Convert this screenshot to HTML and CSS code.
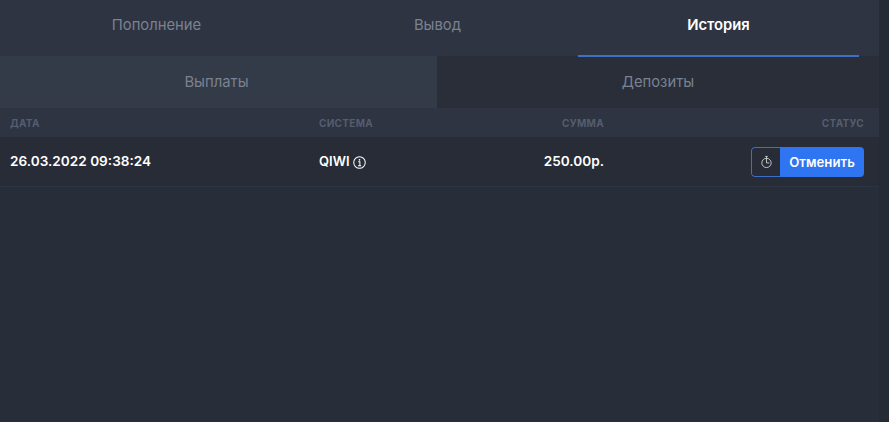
FILE: index.html
```html
<!DOCTYPE html>
<html lang="ru">
<head>
<meta charset="utf-8">
<title>История</title>
<link rel="stylesheet" href="styles.css">
</head>
<body>
<div class="page">
  <main class="panel">
    <nav class="tabs">
      <a class="tab">Пополнение</a>
      <a class="tab">Вывод</a>
      <a class="tab tab-active">История</a>
    </nav>
    <div class="subtabs">
      <a class="subtab subtab-active">Выплаты</a>
      <a class="subtab">Депозиты</a>
    </div>
    <div class="row row-head">
      <div class="col-date">Дата</div>
      <div class="col-system">Система</div>
      <div class="col-sum">Сумма</div>
      <div class="col-status">Статус</div>
    </div>
    <div class="row row-body">
      <div class="col-date">26.03.2022 09:38:24</div>
      <div class="col-system"><span class="system-name">QIWI</span>
        <svg class="info" viewBox="0 0 14 14" width="13" height="13" aria-hidden="true">
          <circle cx="7" cy="7" r="6.2" fill="none" stroke="#fff" stroke-width="1.1"/>
          <circle cx="7" cy="4.1" r="0.9" fill="#fff"/>
          <path d="M5.6 6.3H7.4V10.2M5.4 10.4H8.8" fill="none" stroke="#fff" stroke-width="1.1"/>
        </svg>
      </div>
      <div class="col-sum">250.00р.</div>
      <div class="col-status col-action">
        <div class="action">
          <span class="timer">
            <svg viewBox="0 0 14 14" width="13" height="14" aria-hidden="true">
              <circle cx="7" cy="8" r="5" fill="none" stroke="#c9ccd3" stroke-width="1"/>
              <path d="M7 1V8H10M5.6 1H8.4" fill="none" stroke="#c9ccd3" stroke-width="1"/>
            </svg>
          </span>
          <button class="cancel">Отменить</button>
        </div>
      </div>
    </div>
  </main>
  <aside class="gutter"></aside>
</div>
</body>
</html>
```

FILE: styles.css
```css
* { box-sizing: border-box; }
html, body { height: 100%; }
body {
  margin: 0;
  background: #282e39;
  font-family: "Inter", "Noto Sans", sans-serif;
  color: #fff;
  overflow: hidden;
}
.page { display: flex; height: 422px; }
.panel { flex: 1; min-width: 0; }
.gutter { width: 10px; background: #252a34; }
.tabs {
  display: grid;
  grid-template-columns: repeat(3, 281px);
  padding-left: 16px;
  height: 56px;
  background: #2e3441;
}
.tab {
  display: flex;
  align-items: center;
  justify-content: center;
  height: 57px;
  padding-bottom: 6px;
  font-size: 14.8px;
  color: #7a8291;
  border-bottom: 2px solid transparent;
  position: relative;
}
.tab-active {
  color: #fff;
  font-weight: 600;
  border-bottom-color: #3d6fc4;
}
.subtabs { display: flex; height: 52px; }
.subtab {
  display: flex;
  align-items: center;
  justify-content: center;
  font-size: 14.8px;
  color: #7a8291;
  background: #292e39;
  flex: 1;
}
.subtab-active { flex: 0 0 437px; padding-right: 4px; background: #333a48; }
.row {
  display: grid;
  grid-template-columns: 309px 143px 142px 1fr;
  align-items: center;
  padding: 0 15px 0 10px;
}
.row-head {
  height: 29px;
  padding-top: 1px;
  background: #2e3441;
  font-size: 10px;
  font-weight: 700;
  letter-spacing: 0.3px;
  text-transform: uppercase;
  color: #555d6f;
}
.row-body {
  height: 50px;
  padding-bottom: 1px;
  background: #272c37;
  border-bottom: 1px solid #2e3340;
  font-size: 13.6px;
  font-weight: 600;
}
.col-system { display: flex; align-items: center; gap: 3px; }
.system-name { font-size: 13px; }
.col-sum { text-align: right; }
.col-status { display: flex; justify-content: flex-end; }
.col-action { margin-top: 2px; }
.info { display: block; margin-top: 2px; }
.action { display: flex; height: 30px; border-radius: 4px; overflow: hidden; }
.timer {
  width: 29px;
  display: flex;
  align-items: center;
  justify-content: center;
  border: 1px solid #3d6fc4;
  border-right: 0;
  border-radius: 4px 0 0 4px;
}
.cancel {
  border: 0;
  margin: 0;
  padding: 0;
  width: 84px;
  background: #2f74f0;
  color: #fff;
  font: 600 13.2px "Inter", "Noto Sans", sans-serif;
}
```
